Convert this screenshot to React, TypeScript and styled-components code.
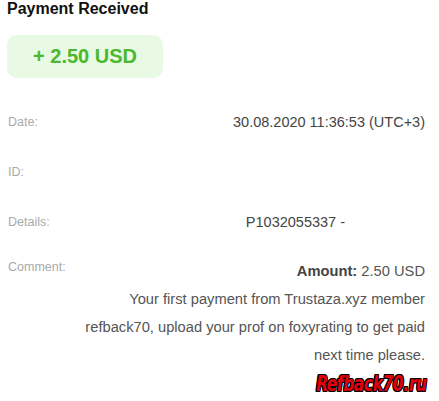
import styled, { createGlobalStyle } from "styled-components";

const GlobalStyle = createGlobalStyle`
  html, body {
    margin: 0;
    padding: 0;
    background: #fff;
  }
  body {
    font-family: "Liberation Sans", Arial, sans-serif;
  }
`;

const Page = styled.div`
  position: relative;
  width: 439px;
  height: 401px;
  padding: 0 14px 0 8px;
  box-sizing: border-box;
  overflow: hidden;
`;

const Title = styled.h1`
  margin: 0 0 0 -1px;
  font-size: 16px;
  line-height: 18px;
  font-weight: 700;
  color: #111;
`;

const AmountBadge = styled.div`
  margin: 17px 0 0 -1px;
  width: 156px;
  height: 43px;
  border-radius: 10px;
  background: #e8f9e4;
  color: #4bb82d;
  font-size: 20px;
  font-weight: 700;
  display: flex;
  align-items: center;
  justify-content: center;
`;

const Rows = styled.div`
  margin-top: 19px;
  display: flex;
  flex-direction: column;
`;

type RowProps = { $height: number };

const Row = styled.div<RowProps>`
  display: grid;
  grid-template-columns: 70px 1fr;
  align-items: start;
  height: ${(p) => p.$height}px;
`;

type LabelProps = { $line?: number };

const Label = styled.div<LabelProps>`
  font-size: 12.5px;
  line-height: ${(p) => p.$line ?? 50}px;
  color: #aaa;
`;

type ValueProps = { $pad?: number };

const Value = styled.div<ValueProps>`
  font-size: 14.5px;
  line-height: 50px;
  color: #444;
  text-align: right;
  white-space: nowrap;
  padding-right: ${(p) => p.$pad ?? 0}px;
`;

const Comment = styled.div`
  margin-top: 10px;
  font-size: 14.7px;
  line-height: 28px;
  color: #555;
  text-align: right;
  white-space: nowrap;
`;

const Strong = styled.b`
  color: #444;
`;

const Watermark = styled.div`
  position: absolute;
  right: 12px;
  top: 371px;
  font-family: "Liberation Sans Narrow", "DejaVu Sans Condensed", sans-serif;
  font-size: 22px;
  font-weight: 700;
  font-style: italic;
  color: #e3000f;
  letter-spacing: -0.5px;
  transform: scaleX(0.78);
  transform-origin: right center;
  text-shadow: -1px -1px 0 #000, 1px -1px 0 #000, -1px 1px 0 #000, 1px 1px 0 #000,
    0 1px 0 #000, 0 -1px 0 #000, 1px 0 0 #000, -1px 0 0 #000;
`;

export default function App() {
  return (
    <Page>
      <GlobalStyle />
      <Title>Payment Received</Title>
      <AmountBadge>+ 2.50 USD</AmountBadge>
      <Rows>
        <Row $height={50}>
          <Label>Date:</Label>
          <Value>30.08.2020 11:36:53 (UTC+3)</Value>
        </Row>
        <Row $height={50}>
          <Label>ID:</Label>
          <Value />
        </Row>
        <Row $height={50}>
          <Label>Details:</Label>
          <Value $pad={80}>P1032055337 -</Value>
        </Row>
        <Row $height={140}>
          <Label $line={40}>Comment:</Label>
          <Comment>
            <Strong>Amount:</Strong> 2.50 USD
            <br />
            Your first payment from Trustaza.xyz member
            <br />
            refback70, upload your prof on foxyrating to get paid
            <br />
            next time please.
          </Comment>
        </Row>
      </Rows>
      <Watermark>Refback70.ru</Watermark>
    </Page>
  );
}
